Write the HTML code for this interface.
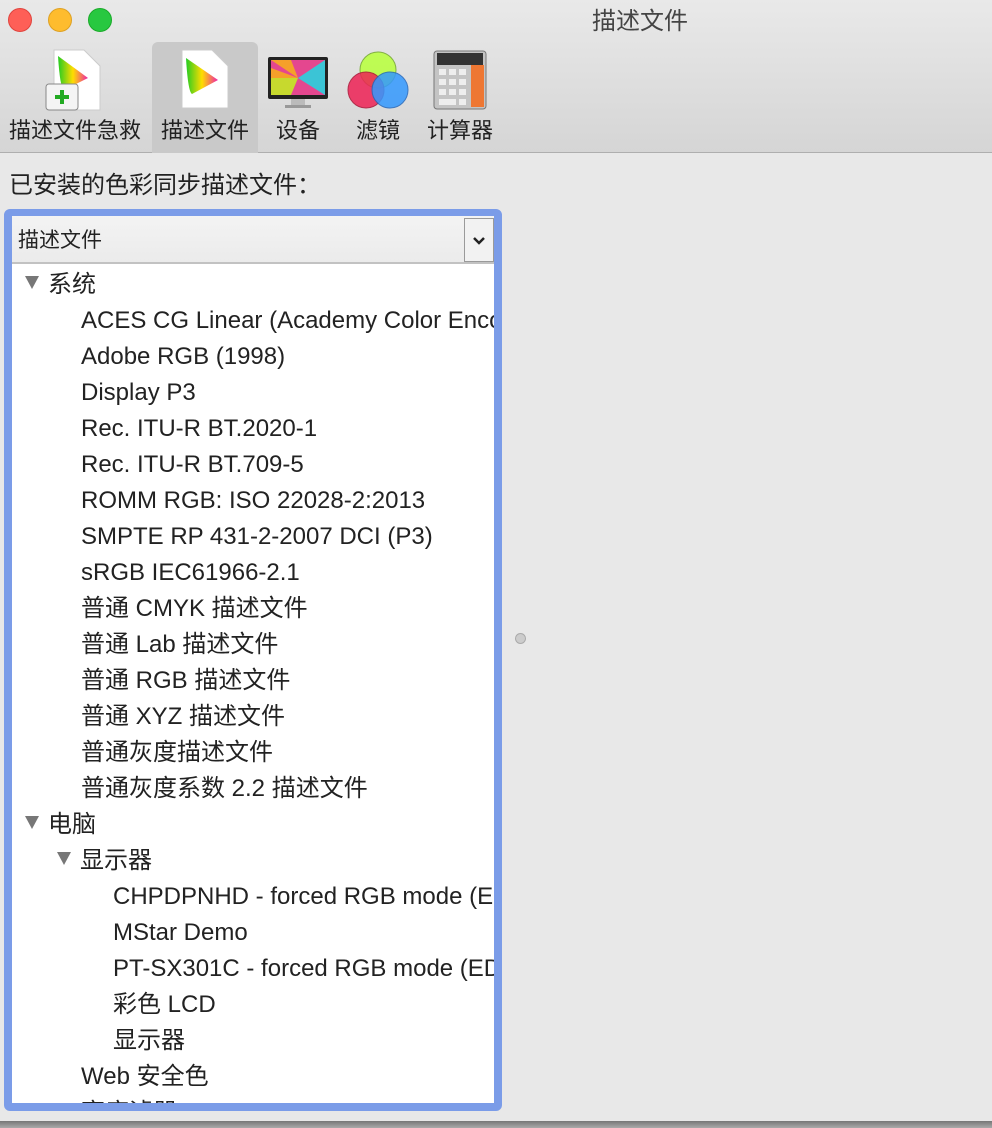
<!DOCTYPE html>
<html><head><meta charset="utf-8"><style>
*{margin:0;padding:0;box-sizing:border-box}
body{width:992px;height:1128px;overflow:hidden;background:#e8e8e8;font-family:"Liberation Sans","Noto Sans CJK SC",sans-serif;color:#222;position:relative}
.top{position:absolute;left:0;top:0;width:992px;height:153px;background:linear-gradient(#e9e9e9,#d5d5d5);border-bottom:1px solid #aeaeae}
.dot{position:absolute;top:8px;width:24px;height:24px;border-radius:50%}
.title{position:absolute;left:540px;width:200px;top:6px;text-align:center;font-size:24px;line-height:32px;color:#444}
.sel{position:absolute;left:152px;top:42px;width:106px;height:111px;background:#c9c9c9;border-radius:6px 6px 0 0}
.lab{position:absolute;top:117px;font-size:22px;line-height:28px;color:#222}
.ic{position:absolute}
.heading{position:absolute;left:9px;top:171px;font-size:24px;line-height:30px;color:#222}
.box{position:absolute;left:4px;top:209px;width:498px;height:902px;border:4px solid #7b9ce8;border-radius:6px;background:#7b9ce8}
.inner{position:absolute;left:4px;top:3px;width:482px;height:887px;background:#fff;overflow:hidden}
.hdr{position:absolute;left:0;top:0;width:482px;height:48px;background:linear-gradient(#f3f3f3,#ebebeb);border-bottom:2px solid #c2c2c2;font-size:21px;line-height:50px;padding-left:6px}
.btn{position:absolute;right:0;top:2px;width:30px;height:44px;border:1px solid #9a9a9a;background:#f2f2f2;text-align:center;line-height:0}
.row{position:absolute;font-size:24px;line-height:36px;white-space:nowrap;color:#222}
.tri{display:inline-block;width:0;height:0;border-left:7px solid transparent;border-right:7px solid transparent;border-top:13px solid #777;margin-right:9px;vertical-align:3px}
</style></head><body>
<div class="top">
<div class="dot" style="left:8px;background:#fe5f57;border:1px solid #e0443e"></div>
<div class="dot" style="left:48px;background:#febc2e;border:1px solid #dea123"></div>
<div class="dot" style="left:88px;background:#28c840;border:1px solid #1aab29"></div>
<div class="title">描述文件</div>
<div class="sel"></div>
<svg class="ic" style="left:44px;top:48px" width="58" height="64"><defs><linearGradient id="g1" x1="0" x2="1"><stop offset="0" stop-color="#2c2"/><stop offset=".5" stop-color="#fd0"/><stop offset="1" stop-color="#e2a"/></linearGradient></defs><path d="M10 2h30l16 16v44H10z" fill="#fff" stroke="#ccc"/><path d="M14 8 Q16 40 20 42 L44 30 Z" fill="url(#g1)"/><rect x="2" y="36" width="32" height="26" rx="3" fill="#f4f4f4" stroke="#888"/><path d="M18 42v14M11 49h14" stroke="#2a2" stroke-width="4"/></svg>
<svg class="ic" style="left:180px;top:48px" width="50" height="62"><path d="M2 2h30l16 16v42H2z" fill="#fff" stroke="#ccc"/><path d="M6 10 Q8 44 12 46 L38 32 Z" fill="url(#g1)"/></svg>
<svg class="ic" style="left:267px;top:56px" width="62" height="54"><rect x="1" y="1" width="60" height="42" rx="2" fill="#222"/><rect x="4" y="4" width="54" height="35" fill="#e4478f"/><path d="M4 4h20L31 22zM4 39V12l27 10z" fill="#f5a02a"/><path d="M4 22v17h20L31 22z" fill="#c7d92e"/><path d="M58 4v16L31 22zM58 39V20L31 22z" fill="#3bc4d6"/><rect x="24" y="43" width="14" height="6" fill="#bbb"/><rect x="18" y="49" width="26" height="3" fill="#999"/></svg>
<svg class="ic" style="left:346px;top:50px" width="64" height="62"><circle cx="32" cy="20" r="18" fill="#bf4" opacity=".9" stroke="#7a3"/><circle cx="20" cy="40" r="18" fill="#e25" opacity=".85" stroke="#a13"/><circle cx="44" cy="40" r="18" fill="#39f" opacity=".85" stroke="#26b"/></svg>
<svg class="ic" style="left:433px;top:50px" width="54" height="60"><rect x="1" y="1" width="52" height="58" rx="3" fill="#c4c4c4" stroke="#777"/><rect x="4" y="3" width="46" height="12" fill="#333"/><rect x="38" y="15" width="13" height="42" fill="#e73"/><g fill="#eee"><rect x="6" y="19" width="7" height="6"/><rect x="16" y="19" width="7" height="6"/><rect x="26" y="19" width="7" height="6"/><rect x="6" y="29" width="7" height="6"/><rect x="16" y="29" width="7" height="6"/><rect x="26" y="29" width="7" height="6"/><rect x="6" y="39" width="7" height="6"/><rect x="16" y="39" width="7" height="6"/><rect x="26" y="39" width="7" height="6"/><rect x="6" y="49" width="17" height="6"/><rect x="26" y="49" width="7" height="6"/></g></svg>
<div class="lab" style="left:9px">描述文件急救</div>
<div class="lab" style="left:161px">描述文件</div>
<div class="lab" style="left:276px">设备</div>
<div class="lab" style="left:356px">滤镜</div>
<div class="lab" style="left:427px">计算器</div>
</div>
<div class="heading">已安装的色彩同步描述文件：</div>
<div class="box"><div class="inner">
<div class="hdr">描述文件<div class="btn"><svg width="28" height="42"><path d="M9 19l5 5 5-5" fill="none" stroke="#222" stroke-width="2.5"/></svg></div></div>
<div class="row" style="left:13px;top:51px"><span class="tri"></span>系统</div>
<div class="row" style="left:69px;top:87px">ACES CG Linear (Academy Color Encoding System AP1)</div>
<div class="row" style="left:69px;top:123px">Adobe RGB (1998)</div>
<div class="row" style="left:69px;top:159px">Display P3</div>
<div class="row" style="left:69px;top:195px">Rec. ITU-R BT.2020-1</div>
<div class="row" style="left:69px;top:231px">Rec. ITU-R BT.709-5</div>
<div class="row" style="left:69px;top:267px">ROMM RGB: ISO 22028-2:2013</div>
<div class="row" style="left:69px;top:303px">SMPTE RP 431-2-2007 DCI (P3)</div>
<div class="row" style="left:69px;top:339px">sRGB IEC61966-2.1</div>
<div class="row" style="left:69px;top:375px">普通 CMYK 描述文件</div>
<div class="row" style="left:69px;top:411px">普通 Lab 描述文件</div>
<div class="row" style="left:69px;top:447px">普通 RGB 描述文件</div>
<div class="row" style="left:69px;top:483px">普通 XYZ 描述文件</div>
<div class="row" style="left:69px;top:519px">普通灰度描述文件</div>
<div class="row" style="left:69px;top:555px">普通灰度系数 2.2 描述文件</div>
<div class="row" style="left:13px;top:591px"><span class="tri"></span>电脑</div>
<div class="row" style="left:45px;top:627px"><span class="tri"></span>显示器</div>
<div class="row" style="left:101px;top:663px">CHPDPNHD - forced RGB mode (EDID override)</div>
<div class="row" style="left:101px;top:699px">MStar Demo</div>
<div class="row" style="left:101px;top:735px">PT-SX301C - forced RGB mode (EDID override)</div>
<div class="row" style="left:101px;top:771px">彩色 LCD</div>
<div class="row" style="left:101px;top:807px">显示器</div>
<div class="row" style="left:69px;top:843px">Web 安全色</div>
<div class="row" style="left:69px;top:879px">亮度滤器</div>
</div></div>
<div style="position:absolute;left:515px;top:633px;width:11px;height:11px;border-radius:50%;background:#ccc;border:1px solid #aaa"></div>
<div style="position:absolute;left:0;top:1121px;width:992px;height:7px;background:linear-gradient(#777,#aaa)"></div>
</body></html>
